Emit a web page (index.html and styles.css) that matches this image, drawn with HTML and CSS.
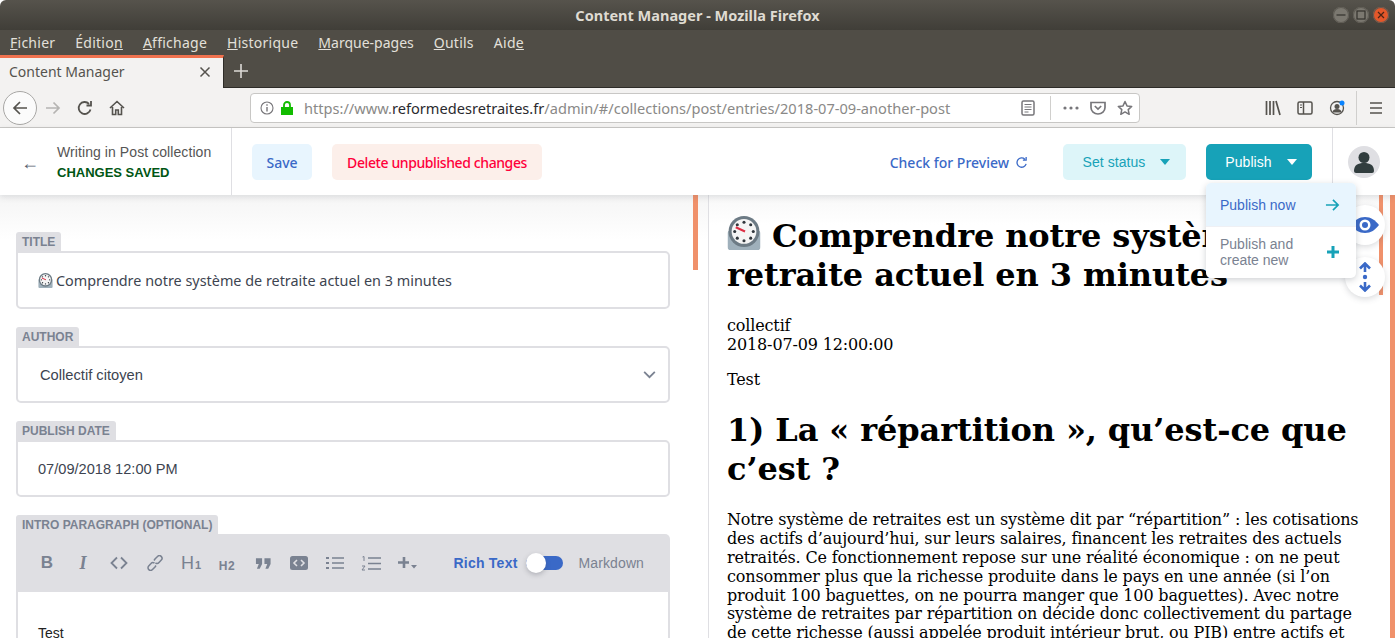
FILE: index.html
```html
<!DOCTYPE html>
<html lang="fr">
<head>
  <meta charset="UTF-8" />
  <title>Content Manager - Mozilla Firefox</title>
  <link rel="stylesheet" href="styles.css">
</head>
<body>
  <div class="titlebar">
    <span class="titlebar-text">Content Manager - Mozilla Firefox</span>
    <div class="wm-buttons">
      <span class="wm-btn"><svg viewBox="0 0 16 16" width="16" height="16"><path d="M3.500 8h9" stroke="#33312c" stroke-width="1.200"/></svg></span>
      <span class="wm-btn"><svg viewBox="0 0 16 16" width="16" height="16"><rect x="4" y="4" width="8" height="8" fill="none" stroke="#33312c" stroke-width="1.200"/></svg></span>
      <span class="wm-btn wm-close"><svg viewBox="0 0 16 16" width="16" height="16"><path d="M5 5l6 6M11 5l-6 6" stroke="#4a2416" stroke-width="1.200"/></svg></span>
    </div>
  </div>
  <nav class="menubar">
    <span><u>F</u>ichier</span>
    <span>Éditio<u>n</u></span>
    <span><u>A</u>ffichage</span>
    <span><u>H</u>istorique</span>
    <span class="menu-long"><u>M</u>arque-pages</span>
    <span><u>O</u>utils</span>
    <span>Aid<u>e</u></span>
  </nav>
  <div class="tabbar">
    <div class="tab">
      <span>Content Manager</span>
      <svg viewBox="0 0 12 12" width="12" height="12"><path d="M1.500 1.500l9 9M10.500 1.500l-9 9" stroke="#55534e" stroke-width="1.500"/></svg>
    </div>
    <svg class="new-tab" viewBox="0 0 14 14" width="14" height="14"><path d="M7 0v14M0 7h14" stroke="#dcdad6" stroke-width="1.600"/></svg>
  </div>
  <div class="navbar">
    <span class="back-btn"><svg viewBox="0 0 16 16" width="16" height="16"><path d="M15 8H2M8 2L2 8l6 6" fill="none" stroke="#55534e" stroke-width="1.700"/></svg></span>
    <svg class="nav-icon nav-forward" viewBox="0 0 16 16" width="16" height="16"><path d="M1 8h13M8.500 2.500L14 8l-5.500 5.500" fill="none" stroke="#b5b4b2" stroke-width="1.700"/></svg>
    <svg class="nav-icon" viewBox="0 0 16 16" width="16" height="16"><path d="M13.500 9.500A6 6 0 1 1 12 3.800M14 1v4.500H9.500" fill="none" stroke="#55534e" stroke-width="1.800"/></svg>
    <svg class="nav-icon" viewBox="0 0 16 16" width="16" height="16"><path d="M1 8l7-6.500L15 8M3.500 7v7.500h3.200V10h2.600v4.500h3.200V7" fill="none" stroke="#55534e" stroke-width="1.600"/></svg>
    <div class="urlbar">
      <svg class="url-info" viewBox="0 0 14 14" width="14" height="14"><circle cx="7" cy="7" r="6" fill="none" stroke="#77767a" stroke-width="1.100"/><path d="M7 6v4.500M7 3.300v1.500" stroke="#77767a" stroke-width="1.400"/></svg>
      <svg class="url-lock" viewBox="0 0 12 14" width="12" height="14"><path d="M0 6h12v8H0z" fill="#12bc00"/><path d="M3 6V4a3 3 0 0 1 6 0v2" fill="none" stroke="#12bc00" stroke-width="1.800"/></svg>
      <span class="url-text">https://www.<b>reformedesretraites.fr</b>/admin/#/collections/post/entries/2018-07-09-another-post</span>
      <svg viewBox="0 0 14 16" width="14" height="16"><rect x="1" y="1" width="12" height="14" rx="1.500" fill="none" stroke="#77767a" stroke-width="1.500"/><path d="M3.500 4.500h7M3.500 7h7M3.500 9.500h7M3.500 12h4" stroke="#77767a"/></svg>
      <span class="url-sep"></span>
      <svg viewBox="0 0 16 4" width="16" height="4"><circle cx="2" cy="2" r="1.600" fill="#77767a"/><circle cx="8" cy="2" r="1.600" fill="#77767a"/><circle cx="14" cy="2" r="1.600" fill="#77767a"/></svg>
      <svg viewBox="0 0 16 14" width="16" height="14"><path d="M1 1.500h14v5a7 6.500 0 0 1-14 0z" fill="none" stroke="#77767a" stroke-width="1.700"/><path d="M4.800 5l3.200 3 3.200-3" fill="none" stroke="#77767a" stroke-width="1.700"/></svg>
      <svg viewBox="0 0 16 16" width="16" height="16"><path d="M8 1.500l2 4.400 4.700.5-3.500 3.200 1 4.700L8 11.900l-4.200 2.400 1-4.700L1.300 6.400 6 5.900z" fill="none" stroke="#77767a" stroke-width="1.500" stroke-linejoin="round"/></svg>
    </div>
    <div class="nav-right">
      <svg viewBox="0 0 16 16" width="16" height="16"><path d="M1.500 1v14M5 1v14M8.500 1v14M11 1l4 14" fill="none" stroke="#55534e" stroke-width="1.700"/></svg>
      <svg viewBox="0 0 16 14" width="16" height="14"><rect x="1" y="1" width="14" height="12" rx="1.500" fill="none" stroke="#55534e" stroke-width="1.500"/><path d="M6.500 1v12" stroke="#55534e" stroke-width="1.500"/><path d="M3 4h2M3 6.500h2" stroke="#55534e"/></svg>
      <svg class="sync" viewBox="0 0 16 16" width="16" height="16"><circle cx="8" cy="8" r="6.500" fill="none" stroke="#55534e" stroke-width="1.300"/><circle cx="8" cy="6.500" r="2.500" fill="#55534e"/><path d="M3.500 12.500a4.500 3.500 0 0 1 9 0z" fill="#55534e"/><circle cx="13" cy="3" r="2.500" fill="#0a84ff"/></svg>
      <span class="nav-sep"></span>
      <svg viewBox="0 0 14 12" width="14" height="12"><path d="M1 1h12M1 6h12M1 11h12" stroke="#55534e" stroke-width="1.700"/></svg>
    </div>
  </div>

  <div class="app">
    <header class="app-header">
      <div class="header-left">
        <span class="back-arrow">←</span>
        <div class="status">
          <div class="status-where">Writing in Post collection</div>
          <div class="status-saved">CHANGES SAVED</div>
        </div>
      </div>
      <div class="header-main">
        <button class="btn btn-save">Save</button>
        <button class="btn btn-delete">Delete unpublished changes</button>
        <span class="preview-link">Check for Preview
          <svg viewBox="0 0 14 14" width="13" height="13"><path d="M12 8.500A5 5 0 1 1 10.600 3.400M12 1v3.500H8.500" fill="none" stroke="#3a69c7" stroke-width="1.400"/></svg>
        </span>
        <button class="btn btn-status">Set status <i class="caret"></i></button>
        <button class="btn btn-publish">Publish <i class="caret"></i></button>
      </div>
      <div class="header-user">
        <span class="avatar"><svg viewBox="0 0 32 32" width="32" height="32"><circle cx="16" cy="11.500" r="5.500" fill="#313d3e"/><path d="M6 25c0-6 4-8 10-8s10 2 10 8a2 2 0 0 1-2 2H8a2 2 0 0 1-2-2z" fill="#313d3e"/></svg></span>
      </div>
    </header>

    <div class="publish-menu">
      <div class="publish-item publish-now">
        <span>Publish now</span>
        <svg class="publish-arrow" viewBox="0 0 16 14" width="15" height="14"><path d="M1 7h13M8.500 1.500L14 7l-5.500 5.500" fill="none" stroke="#17a2b8" stroke-width="1.800"/></svg>
      </div>
      <div class="publish-item publish-new">
        <span>Publish and<br>create new</span>
        <svg viewBox="0 0 12 12" width="12" height="12"><path d="M6 0v12M0 6h12" stroke="#17a2b8" stroke-width="3"/></svg>
      </div>
    </div>

    <div class="panes">
      <section class="editor">
        <div class="scroll-thumb"></div>
        <div class="field">
          <label class="field-label">TITLE</label>
          <div class="field-box field-title">
            <svg class="clock clock-small" viewBox="0 0 32 33"><use href="#stopclock"/></svg>
            <span>Comprendre notre système de retraite actuel en 3 minutes</span>
          </div>
        </div>
        <div class="field">
          <label class="field-label">AUTHOR</label>
          <div class="field-box field-author">
            <span>Collectif citoyen</span>
            <svg viewBox="0 0 14 9" width="13" height="8"><path d="M1 1l6 6 6-6" fill="none" stroke="#7a8291" stroke-width="2"/></svg>
          </div>
        </div>
        <div class="field">
          <label class="field-label">PUBLISH DATE</label>
          <div class="field-box field-date">07/09/2018 12:00 PM</div>
        </div>
        <div class="field">
          <label class="field-label">INTRO PARAGRAPH (OPTIONAL)</label>
          <div class="rich">
            <div class="toolbar">
              <div class="tools">
                <span class="tool tool-b">B</span>
                <span class="tool tool-i">I</span>
                <span class="tool"><svg viewBox="0 0 18 14" width="18" height="14"><path d="M7 1.500L1.500 7 7 12.500M11 1.500L16.500 7 11 12.500" fill="none" stroke="#7a8291" stroke-width="1.800"/></svg></span>
                <span class="tool"><svg viewBox="0 0 16 16" width="16" height="16"><g fill="none" stroke="#7a8291" stroke-width="1.500"><path d="M7 5.500l1-1.500 2.500-2.500a2.500 2.500 0 0 1 3.800 3.500L12 7.500a2.500 2.500 0 0 1-3.500.3"/><path d="M9 10.500l-1 1.500-2.500 2.500a2.500 2.500 0 0 1-3.800-3.500L4 8.500a2.500 2.500 0 0 1 3.500-.3"/></g></svg></span>
                <span class="tool tool-h1">H<small>1</small></span>
                <span class="tool tool-h2">H<small>2</small></span>
                <span class="tool"><svg viewBox="0 0 18 13" width="17" height="13"><path d="M1 1h6.500v6L5 12H2l2-5H1zM10 1h6.500v6L14 12h-3l2-5h-3z" fill="#7a8291"/></svg></span>
                <span class="tool"><svg viewBox="0 0 18 14" width="18" height="14"><rect width="18" height="14" rx="2.500" fill="#7a8291"/><path d="M7 4L4 7l3 3M11 4l3 3-3 3" fill="none" stroke="#dfdfe3" stroke-width="1.600"/></svg></span>
                <span class="tool"><svg viewBox="0 0 18 14" width="18" height="14"><path d="M6 2h12M6 7h12M6 12h12" stroke="#7a8291" stroke-width="1.500"/><path d="M0 2h3M0 7h3M0 12h3" stroke="#7a8291" stroke-width="2"/></svg></span>
                <span class="tool"><svg viewBox="0 0 20 15" width="20" height="15"><path d="M7 2h13M7 7.500h13M7 13h13" stroke="#7a8291" stroke-width="1.500"/><path d="M1.500 1l1.500-.5V5M1 10h3l-3 4h3" fill="none" stroke="#7a8291"/></svg></span>
                <span class="tool"><svg viewBox="0 0 19 12" width="19" height="12"><path d="M6 0v11M0 5.500h11" stroke="#7a8291" stroke-width="2.600"/><path d="M13 8h6l-3 3.500z" fill="#7a8291"/></svg></span>
              </div>
              <div class="mode">
                <span class="mode-rich">Rich Text</span>
                <span class="switch"><i class="knob"></i></span>
                <span class="mode-md">Markdown</span>
              </div>
            </div>
            <div class="rich-body">Test</div>
          </div>
        </div>
      </section>

      <section class="preview">
        <h1><svg class="clock clock-big" viewBox="0 0 32 33"><use href="#stopclock"/></svg> Comprendre notre système de retraite actuel en 3 minutes</h1>
        <p>collectif<br>2018-07-09 12:00:00</p>
        <p>Test</p>
        <h1>1) La « répartition », qu’est-ce que c’est ?</h1>
        <p>Notre système de retraites est un système dit par “répartition” : les cotisations des actifs d’aujourd’hui, sur leurs salaires, financent les retraites des actuels retraités. Ce fonctionnement repose sur une réalité économique : on ne peut consommer plus que la richesse produite dans le pays en une année (si l’on produit 100 baguettes, on ne pourra manger que 100 baguettes). Avec notre système de retraites par répartition on décide donc collectivement du partage de cette richesse (aussi appelée produit intérieur brut, ou PIB) entre actifs et retraités.</p>
        <span class="preview-thumb"></span>
        <span class="preview-track"></span>
      </section>
    </div>

    <span class="round-btn round-eye"><svg viewBox="0 0 30 18" width="30" height="18"><path d="M1 9c4-5 8-8 14-8s10 3 14 8c-4 5-8 8-14 8S5 14 1 9z" fill="#3a69c7"/><circle cx="15" cy="9" r="5.500" fill="#fff"/><circle cx="15" cy="9" r="3" fill="#3a69c7"/></svg></span>
    <span class="round-btn round-sync"><svg viewBox="0 0 14 30" width="14" height="30"><path d="M7 2v8M2 6.500l5-5 5 5M7 20v8M2 23.500l5 5 5-5" fill="none" stroke="#3a69c7" stroke-width="2.600"/><circle cx="7" cy="15" r="2.200" fill="#3a69c7"/></svg></span>
  </div>

  <svg class="defs" width="0" height="0">
    <symbol id="stopclock" viewBox="0 0 32 33">
      <rect x="0" y="14" width="32" height="19" rx="3" fill="#9fb0bb"/>
      <circle cx="16" cy="15" r="15" fill="#6d7b85"/>
      <circle cx="16" cy="15" r="12" fill="#f5f5f5"/>
      <g fill="#31373d"><circle cx="16" cy="6" r="1.500"/><circle cx="16" cy="24" r="1.500"/><circle cx="7" cy="15" r="1.500"/><circle cx="25" cy="15" r="1.500"/><circle cx="9.500" cy="8.500" r="1.500"/><circle cx="22.500" cy="8.500" r="1.500"/><circle cx="9.500" cy="21.500" r="1.500"/><circle cx="22.500" cy="21.500" r="1.500"/></g>
      <path d="M8 11l9 4" stroke="#dd2e44" stroke-width="2.200"/>
    </symbol>
  </svg>
</body>
</html>
```

FILE: styles.css
```css
* {
  box-sizing: border-box;
}

html,
body {
  height: 638px;
  overflow: hidden;
}

body {
  margin: 0;
  background: #fff;
  font-family: "Liberation Sans", Arial, sans-serif;
  display: flex;
  flex-direction: column;
}

svg {
  display: block;
  flex: none;
}

.defs {
  position: absolute;
}

/* browser chrome */
.titlebar {
  height: 30px;
  flex: none;
  background: linear-gradient(#56534c, #403e38);
  border-radius: 6px 6px 0 0;
  display: flex;
  align-items: center;
  justify-content: center;
  position: relative;
}

.titlebar-text {
  color: #dfdbd2;
  font: bold 14.500px "Noto Sans", sans-serif;
}

.wm-buttons {
  position: absolute;
  right: 6px;
  top: 7px;
  display: flex;
  gap: 4px;
}

.wm-btn {
  width: 16px;
  height: 16px;
  border-radius: 50%;
  background: #7b7870;
  box-shadow: inset 0 0 0 1px #5e5b54;
}

.wm-close {
  background: #e4572a;
}

.menubar {
  height: 25px;
  flex: none;
  background: #504d46;
  color: #e3e0da;
  font: 14px "Noto Sans", sans-serif;
  letter-spacing: 0.25px;
  display: flex;
  align-items: center;
  gap: 20px;
  padding: 0 10px;
}

.menu-long {
  letter-spacing: 0;
}

.tabbar {
  height: 33px;
  flex: none;
  background: #504d46;
  border-bottom: 1px solid #2e2c28;
  display: flex;
  align-items: center;
}

.tab {
  width: 224px;
  height: 33px;
  background: #f3f2f1;
  border-top: 3px solid #f0724f;
  border-right: 1px solid #2e2c28;
  color: #55534e;
  font: 14px "Noto Sans", sans-serif;
  display: flex;
  align-items: center;
  justify-content: space-between;
  padding: 0 12px 2px 9px;
}

.new-tab {
  margin-left: 10px;
}

.navbar {
  height: 40px;
  flex: none;
  background: #f3f2f1;
  border-bottom: 1px solid #c8c7c5;
  display: flex;
  align-items: center;
  padding: 1px 12px 0 3px;
  position: relative;
}

.back-btn {
  width: 34px;
  height: 34px;
  border: 1px solid #a8a7a5;
  border-radius: 50%;
  background: #fbfbfb;
  display: flex;
  align-items: center;
  justify-content: center;
}

.nav-icon {
  margin-left: 16px;
}

.nav-forward {
  margin-left: 8px;
}

.urlbar {
  width: 890px;
  height: 30px;
  margin-left: 125px;
  background: #fff;
  border: 1px solid #c8c7c5;
  border-radius: 4px;
  display: flex;
  align-items: center;
  padding: 0 6px 0 9px;
  color: #8a8987;
  font: 14.600px "Noto Sans", sans-serif;
}

.url-text {
  margin-left: 11px;
  flex: 1;
  white-space: nowrap;
  overflow: hidden;
}

.url-text b {
  font-weight: normal;
  color: #2a2a2e;
}

.url-sep {
  width: 1px;
  height: 24px;
  background: #d0cfcd;
  margin: 0 12px 0 15px;
}

.urlbar svg + svg {
  margin-left: 11px;
}

.urlbar .url-lock {
  margin-left: 7px;
}

.nav-right {
  margin-left: auto;
  display: flex;
  align-items: center;
  gap: 16px;
}

.nav-sep {
  width: 1px;
  height: 34px;
  background: #d0cfcd;
  margin: 0 -4px 0 -5px;
}

/* cms header */
.app {
  flex: 1;
  min-height: 0;
  display: flex;
  flex-direction: column;
  position: relative;
}

.app-header {
  height: 67px;
  flex: none;
  background: #fff;
  box-shadow: 0 2px 6px rgba(68, 74, 87, 0.15);
  display: flex;
  position: relative;
  z-index: 2;
}

.header-left {
  width: 232px;
  border-right: 1px solid #dfdfe3;
  display: flex;
  align-items: center;
  padding: 3px 0 0 21px;
}

.back-arrow {
  width: 36px;
  font-size: 18px;
  color: #55606e;
}

.status-where {
  font-size: 14px;
  letter-spacing: 0.08px;
  color: #555;
  line-height: 18px;
}

.status-saved {
  font-size: 13px;
  font-weight: bold;
  color: #005614;
  line-height: 20px;
  margin-top: 2px;
}

.header-main {
  flex: 1;
  display: flex;
  align-items: center;
  padding: 0 20px;
}

.btn {
  height: 36px;
  border: 0;
  border-radius: 5px;
  font: 14px "Noto Sans", sans-serif;
  display: flex;
  align-items: center;
  justify-content: center;
}

.btn-save {
  width: 60px;
  padding: 1px 0 0;
  background: #e8f5fe;
  color: #3a69c7;
  font-weight: 500;
}

.btn-delete {
  width: 210px;
  padding: 1px 0 0;
  margin-left: 20px;
  background: #fcefea;
  color: #ff003b;
  font-weight: 500;
  letter-spacing: -0.4px;
}

.preview-link {
  margin-left: auto;
  margin-right: 35px;
  padding-top: 1px;
  color: #3a69c7;
  font: 500 14px "Noto Sans", sans-serif;
  display: flex;
  align-items: center;
  gap: 6px;
}

.btn-status,
.btn-publish {
  padding: 0 0 0 4px;
  font: 14px "Liberation Sans", sans-serif;
  letter-spacing: 0.05px;
}

.btn-status {
  width: 123px;
  background: #ddf5f9;
  color: #17a2b8;
}

.btn-publish {
  width: 106px;
  margin-left: 20px;
  background: #17a2b8;
  color: #fff;
}

.caret {
  width: 0;
  height: 0;
  margin-left: 15px;
  border: 5px solid transparent;
  border-top: 6px solid currentColor;
  border-bottom: 0;
}

.header-user {
  width: 63px;
  border-left: 1px solid #dfdfe3;
  display: flex;
  align-items: center;
  justify-content: center;
}

.avatar {
  width: 32px;
  height: 32px;
  border-radius: 50%;
  background: #dfdfe3;
}

.publish-menu {
  position: absolute;
  left: 1206px;
  top: 55px;
  width: 150px;
  background: #fff;
  border-radius: 5px;
  box-shadow: 0 2px 6px rgba(68, 74, 87, 0.25);
  overflow: hidden;
  z-index: 5;
  font-size: 14px;
  line-height: 16px;
}

.publish-item {
  display: flex;
  align-items: center;
  justify-content: space-between;
  padding: 0 17px 0 14px;
}

.publish-now {
  height: 43px;
  background: #e8f5fe;
  color: #3a69c7;
}

.publish-arrow {
  margin-right: -1px;
}

.publish-new {
  height: 52px;
  padding-bottom: 2px;
  color: #7a8291;
  border-top: 1px solid #eff0f4;
}

/* panes */
.panes {
  flex: 1;
  min-height: 0;
  display: flex;
}

.editor {
  width: 709px;
  flex: none;
  border-right: 1px solid #dfdfe3;
  background: linear-gradient(#f5f5f5, #fff 45px);
  padding: 37px 38px 0 16px;
  position: relative;
  overflow: hidden;
}

.scroll-thumb {
  position: absolute;
  left: 693px;
  top: 0;
  width: 5px;
  height: 75px;
  background: #f0916b;
}

.field {
  margin-bottom: 18px;
}

.field-label {
  display: table;
  height: 19px;
  padding: 1px 6px 0;
  background: #dfdfe3;
  border-radius: 3px 3px 0 0;
  color: #7a8291;
  font-size: 12px;
  font-weight: bold;
  line-height: 18px;
}

.field-box {
  height: 58px;
  border: 2px solid #dfdfe3;
  border-radius: 0 5px 5px 5px;
  background: #fff;
  display: flex;
  align-items: center;
  color: #3d4450;
}

.field-title {
  padding-left: 20px;
  gap: 3px;
  font: 14.400px "Noto Sans", sans-serif;
}

.clock {
  display: inline-block;
}

.clock-small {
  width: 15px;
  height: 15px;
}

.field-author {
  padding: 1px 12px 0 22px;
  justify-content: space-between;
  font-size: 14.700px;
}

.field-date {
  padding: 1px 0 0 20px;
  font-size: 14.600px;
}

.field-author,
.field-date {
  height: 57px;
}

.rich {
  border-radius: 0 5px 0 0;
}

.toolbar {
  height: 58px;
  background: #dfdfe3;
  border-radius: 0 5px 0 0;
  display: flex;
  align-items: center;
  justify-content: space-between;
  padding: 0 26px 0 13px;
}

.tools {
  display: flex;
  align-items: center;
}

.tool {
  width: 36px;
  display: flex;
  align-items: center;
  justify-content: center;
  color: #7a8291;
}

.tool-b {
  font-size: 17px;
  font-weight: bold;
}

.tool-i {
  font: italic bold 18px "Liberation Serif", serif;
}

.tool-h1 {
  font-size: 18px;
  align-items: baseline;
}

.tool-h2 {
  padding-top: 5px;
  font-size: 12px;
  font-weight: bold;
  align-items: baseline;
  letter-spacing: 0.5px;
}

.tool-h1 small {
  font-size: 11px;
  font-weight: bold;
  margin-left: 1px;
}

.tool-h2 small {
  font-size: 12px;
}

.mode {
  display: flex;
  align-items: center;
  font-size: 14px;
}

.mode-rich {
  color: #3a69c7;
  font-weight: bold;
  letter-spacing: 0.25px;
}

.mode-md {
  color: #7a8291;
  letter-spacing: 0.1px;
}

.switch {
  width: 37px;
  height: 14px;
  margin: 0 16px 0 8px;
  background: #3a69c7;
  border-radius: 7px;
  position: relative;
}

.knob {
  position: absolute;
  left: 0;
  top: -3px;
  width: 20px;
  height: 20px;
  border-radius: 50%;
  background: #fff;
  box-shadow: 0 2px 5px rgba(68, 74, 87, 0.3);
}

.rich-body {
  height: 60px;
  background: #fff;
  border-left: 2px solid #dfdfe3;
  border-right: 2px solid #dfdfe3;
  padding: 33px 20px 0;
  font-size: 14px;
  color: #222;
}

.preview {
  flex: 1;
  min-width: 0;
  padding: 0 33px 0 18px;
  position: relative;
  overflow: hidden;
  background: linear-gradient(#f8f8f8, #fff 30px);
  font: 16px/18.800px "DejaVu Serif", serif;
  letter-spacing: -0.15px;
  color: #000;
}

.preview h1 {
  font-size: 32px;
  line-height: 39px;
  letter-spacing: -0.1px;
  margin: 22px 0;
}

.preview h1:first-child {
  margin-top: 21px;
}

.preview p {
  margin: 16px 0;
}

.clock-big {
  width: 34px;
  height: 34px;
  vertical-align: -3px;
}

.preview-thumb {
  position: absolute;
  left: 670px;
  top: 0;
  width: 4px;
  height: 100px;
  background: #f0916b;
}

.preview-track {
  position: absolute;
  right: 0;
  top: 0;
  bottom: 0;
  width: 5px;
  background: #f0916b;
}

.round-btn {
  position: absolute;
  left: 1345px;
  width: 40px;
  height: 40px;
  border-radius: 50%;
  background: #fff;
  box-shadow: 0 2px 6px rgba(68, 74, 87, 0.2);
  display: flex;
  align-items: center;
  justify-content: center;
  z-index: 4;
}

.round-eye {
  top: 77px;
}

.round-sync {
  top: 129px;
}
```
